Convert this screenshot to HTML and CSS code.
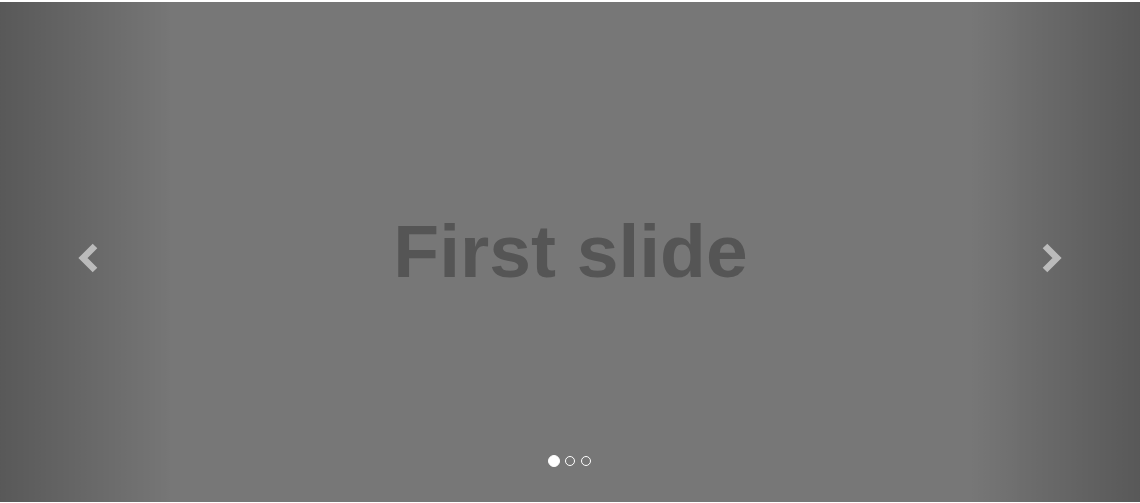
FILE: index.html
```html
<!DOCTYPE html>
<html lang="en">
<head>
<meta charset="utf-8">
<title>Carousel</title>
<link rel="stylesheet" href="styles.css">
</head>
<body>
<div class="page">
  <div class="carousel">
    <div class="slide">
      <span class="slide-text">First slide</span>
    </div>
    <a class="control control-left" href="#">
      <svg class="chev" width="26" height="32" viewBox="0 0 26 32">
        <polyline points="20,4 8,16 20,28" fill="none" stroke="#fff" stroke-width="6.5" stroke-linejoin="miter" stroke-linecap="butt"/>
      </svg>
    </a>
    <a class="control control-right" href="#">
      <svg class="chev" width="26" height="32" viewBox="0 0 26 32">
        <polyline points="6,4 18,16 6,28" fill="none" stroke="#fff" stroke-width="6.5" stroke-linejoin="miter" stroke-linecap="butt"/>
      </svg>
    </a>
    <ol class="indicators">
      <li class="dot active"></li>
      <li class="dot"></li>
      <li class="dot"></li>
    </ol>
  </div>
</div>
</body>
</html>
```
FILE: styles.css
```css
* { box-sizing: border-box; }
html, body { margin: 0; padding: 0; background: #fff; }
.page { padding-top: 2px; }
.carousel {
  position: relative;
  height: 500px;
  background: #777;
  overflow: hidden;
  font-family: "Liberation Sans", Arial, sans-serif;
}
.slide {
  height: 100%;
  display: flex;
  align-items: center;
  justify-content: center;
}
.slide-text {
  font-size: 75px;
  font-weight: bold;
  color: #555;
  line-height: 1;
  margin-top: -2px;
  margin-left: 1px;
}
.control {
  position: absolute;
  top: 0;
  bottom: 0;
  width: 15%;
  opacity: 0.5;
  display: flex;
  align-items: center;
  justify-content: center;
  text-decoration: none;
}
.control-left {
  left: 0;
  background-image: linear-gradient(to right, rgba(0,0,0,.5) 0, rgba(0,0,0,.0001) 100%);
}
.control-right {
  right: 0;
  background-image: linear-gradient(to right, rgba(0,0,0,.0001) 0, rgba(0,0,0,.5) 100%);
}
.control-left .chev { margin-left: 4px; margin-top: 12px; }
.control-right .chev { margin-left: -6px; margin-top: 12px; }
.chev { display: block; }
.indicators {
  position: absolute;
  left: 0;
  right: 0;
  bottom: 35px;
  margin: 0;
  padding: 0;
  list-style: none;
  display: flex;
  justify-content: center;
  align-items: center;
  gap: 4px;
}
.dot {
  width: 10px;
  height: 10px;
  margin: 1px;
  border: 1px solid #fff;
  border-radius: 50%;
}
.dot.active {
  width: 12px;
  height: 12px;
  margin: 0;
  background: #fff;
}
```
